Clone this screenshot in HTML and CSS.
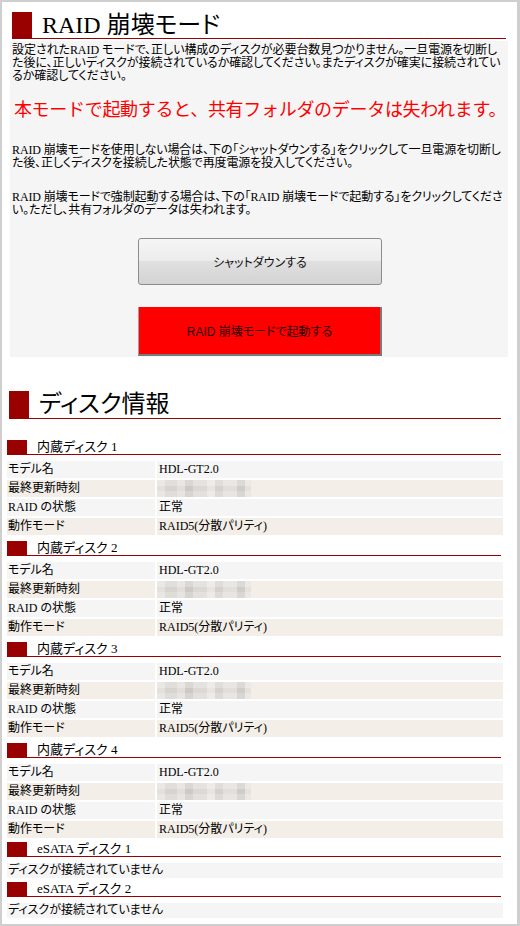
FILE: index.html
```html
<!DOCTYPE html>
<html lang="ja">

<head>
    <meta charset="UTF-8">
    <title>RAID 崩壊モード</title>
    <meta name="viewport" content="width=device-width, initial-scale=1">
    <link rel="stylesheet" href="styles.css">
</head>

<body>
    <div class="page">
        <div class="mode">
            <h1 class="title"><span>RAID 崩壊モード</span></h1>
            <div class="notice">
                <p class="lead">設定されたRAID モードで、正しい構成のディスクが必要台数見つかりません。一旦電源を切断した後に、正しいディスクが接続されているか確認してください。またディスクが確実に接続されているか確認してください。</p>
                <p class="warn">本モードで起動すると、共有フォルダのデータは失われます。</p>
                <p class="p2">RAID 崩壊モードを使用しない場合は、下の「シャットダウンする」をクリックして一旦電源を切断した後、正しくディスクを接続した状態で再度電源を投入してください。</p>
                <p class="p3">RAID 崩壊モードで強制起動する場合は、下の「RAID 崩壊モードで起動する」をクリックしてください。ただし、共有フォルダのデータは失われます。</p>
                <div class="actions">
                    <button class="btn btn-shutdown">シャットダウンする</button>
                    <button class="btn btn-force">RAID 崩壊モードで起動する</button>
                </div>
            </div>
        </div>

        <div class="disk-info">
            <h2 class="title"><span>ディスク情報</span></h2>

            <div class="disk">
                <h3 class="sub"><span>内蔵ディスク 1</span></h3>
                <div class="rows">
                    <div class="key odd">モデル名</div><div class="val odd">HDL-GT2.0</div>
                    <div class="key even">最終更新時刻</div><div class="val even blurred"><span class="blur"></span></div>
                    <div class="key odd">RAID の状態</div><div class="val odd">正常</div>
                    <div class="key even">動作モード</div><div class="val even">RAID5(分散パリティ)</div>
                </div>
            </div>

            <div class="disk">
                <h3 class="sub"><span>内蔵ディスク 2</span></h3>
                <div class="rows">
                    <div class="key odd">モデル名</div><div class="val odd">HDL-GT2.0</div>
                    <div class="key even">最終更新時刻</div><div class="val even blurred"><span class="blur"></span></div>
                    <div class="key odd">RAID の状態</div><div class="val odd">正常</div>
                    <div class="key even">動作モード</div><div class="val even">RAID5(分散パリティ)</div>
                </div>
            </div>

            <div class="disk">
                <h3 class="sub"><span>内蔵ディスク 3</span></h3>
                <div class="rows">
                    <div class="key odd">モデル名</div><div class="val odd">HDL-GT2.0</div>
                    <div class="key even">最終更新時刻</div><div class="val even blurred"><span class="blur"></span></div>
                    <div class="key odd">RAID の状態</div><div class="val odd">正常</div>
                    <div class="key even">動作モード</div><div class="val even">RAID5(分散パリティ)</div>
                </div>
            </div>

            <div class="disk">
                <h3 class="sub"><span>内蔵ディスク 4</span></h3>
                <div class="rows">
                    <div class="key odd">モデル名</div><div class="val odd">HDL-GT2.0</div>
                    <div class="key even">最終更新時刻</div><div class="val even blurred"><span class="blur"></span></div>
                    <div class="key odd">RAID の状態</div><div class="val odd">正常</div>
                    <div class="key even">動作モード</div><div class="val even">RAID5(分散パリティ)</div>
                </div>
            </div>

            <div class="disk esata">
                <h3 class="sub"><span>eSATA ディスク 1</span></h3>
                <div class="empty">ディスクが接続されていません</div>
            </div>

            <div class="disk esata">
                <h3 class="sub"><span>eSATA ディスク 2</span></h3>
                <div class="empty">ディスクが接続されていません</div>
            </div>
        </div>
    </div>
</body>

</html>
```

FILE: styles.css
```css
body {
    margin: 0;
    padding: 0;
    background: #fff;
    color: #000;
    font-family: 'Liberation Serif', 'Noto Sans CJK JP', serif;
    font-feature-settings: "palt";
}

.page {
    height: 926px;
    box-sizing: border-box;
    border: 2px solid #cfcfcf;
    border-right-width: 3px;
    overflow: hidden;
}

/* 見出し：赤い四角＋下線 */
.title {
    display: flex;
    align-items: stretch;
    margin: 0 2px;
    font-size: 24px;
    font-weight: normal;
}

.title::before {
    content: "";
    width: 20px;
    background: #990000;
}

.title span {
    flex: 1;
    padding-left: 10px;
    line-height: 26px;
    border-bottom: 1px solid #990000;
}

/* RAID 崩壊モード */
.mode {
    margin: 10px 9px 0 8px;
}

.notice {
    margin-top: 2px;
    padding: 3px 0 1px 2px;
    background: #f5f5f5;
}

.notice p {
    margin: 0;
    font-size: 12px;
    line-height: 13px;
    letter-spacing: -0.12px;
}

.notice .lead {
    letter-spacing: -0.05px;
}

.notice .warn {
    margin: 17px 0 24px;
    font-size: 18px;
    line-height: 20px;
    letter-spacing: -0.3px;
    color: #ff0000;
    text-align: center;
    white-space: nowrap;
    font-feature-settings: normal;
}

.notice .p3 {
    margin-top: 21px;
}

.actions {
    display: flex;
    flex-direction: column;
    align-items: center;
    gap: 22px;
    margin-top: 21px;
}

.btn {
    width: 244px;
    font-family: 'Liberation Sans', 'Noto Sans CJK JP', sans-serif;
    font-feature-settings: "palt";
    font-size: 12px;
    color: #111;
    cursor: pointer;
    padding: 0;
}

.btn-shutdown {
    height: 47px;
    border: 1px solid #8c8c8c;
    border-radius: 3px;
    background: linear-gradient(#f5f5f5, #ececec 50%, #e0e0e0 50%, #d3d3d3);
}

.btn-force {
    height: 49px;
    border: 0;
    border-left: 1px solid #a0a0a0;
    border-right: 2px solid #7a7a7a;
    border-bottom: 2px solid #7a7a7a;
    background: #ff0000;
    color: #2a0000;
}

/* ディスク情報 */
.disk-info {
    margin: 34px 14px 0 5px;
}

.disk-info .title span {
    line-height: 27px;
}

.disk {
    margin-top: 6px;
}

.disk.esata {
    margin-top: 4px;
}

.disk-info .title + .disk {
    margin-top: 21px;
}

.sub {
    display: flex;
    margin: 0 2px 0 0;
    font-size: 13px;
    font-weight: normal;
}

.sub::before {
    content: "";
    width: 20px;
    background: #990000;
}

.sub span {
    flex: 1;
    padding-left: 10px;
    line-height: 14px;
    border-bottom: 1px solid #990000;
}

.rows {
    display: grid;
    grid-template-columns: 148px 1fr;
    grid-auto-rows: 17px;
    gap: 2px;
    margin-top: 6px;
    font-size: 12px;
    line-height: 17px;
}

.key {
    padding-left: 1px;
}

.val {
    padding-left: 2px;
}

.odd {
    background: #f5f5f5;
}

.even {
    background: #f3eee7;
}

.val.blurred {
    padding-left: 0;
}

.blur {
    display: block;
    width: 94px;
    height: 17px;
    background:
        linear-gradient(rgba(255, 255, 255, 0.25) 0 6px, rgba(0, 0, 0, 0) 6px 11px, rgba(255, 255, 255, 0.2) 11px),
        linear-gradient(90deg, #e4e1dd 0 8px, #d7d4d0 8px 20px, #e1dedb 20px 28px, #cdcac6 28px 36px, #dcd9d5 36px 50px, #e8e5e1 50px 58px, #d5d2ce 58px 66px, #e2dfdb 66px 80px, #d0cdc9 80px 88px, #e5e2de 88px 94px);
}

.empty {
    margin-top: 6px;
    padding-left: 1px;
    background: #f5f5f5;
    font-size: 12px;
    line-height: 15px;
}
```
